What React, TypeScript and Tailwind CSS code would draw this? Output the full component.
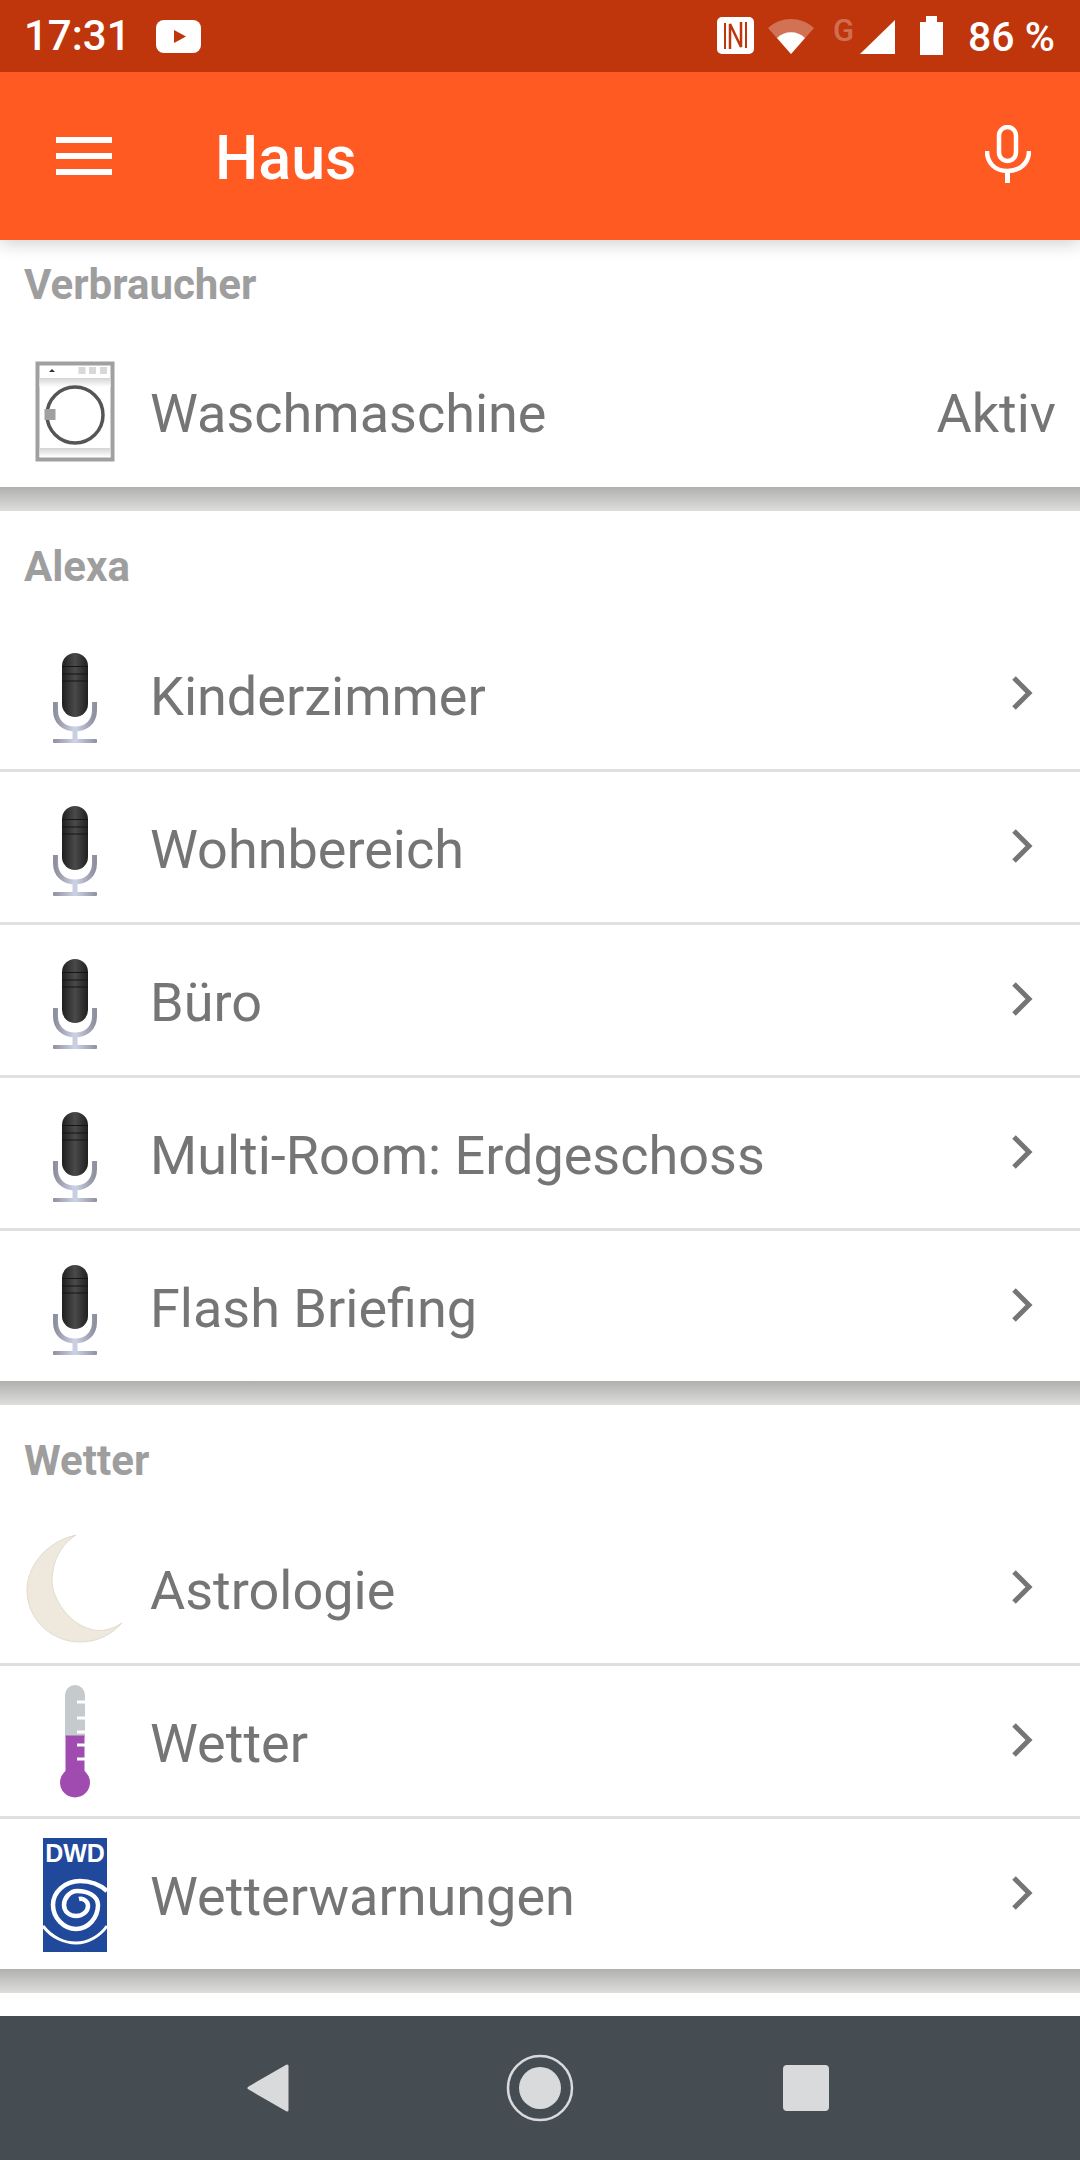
import React from 'react';

const roboto = { fontFamily: 'Roboto, sans-serif' };

const MicIcon = () => (
  <svg width="110" height="110" viewBox="0 0 110 110" className="overflow-visible">
    <defs>
      <linearGradient id="micBody" x1="0" x2="1" y1="0" y2="0">
        <stop offset="0" stopColor="#1f1f1f" />
        <stop offset="0.5" stopColor="#4a4a4a" />
        <stop offset="1" stopColor="#1f1f1f" />
      </linearGradient>
      <linearGradient id="micStand" x1="0" x2="1" y1="0" y2="0">
        <stop offset="0" stopColor="#8f90a0" />
        <stop offset="0.5" stopColor="#cdd3e6" />
        <stop offset="1" stopColor="#8f90a0" />
      </linearGradient>
    </defs>
    <path d="M35.5 64 V72 C35.5 84 44 91 55 91 C66 91 74.5 84 74.5 72 V64" fill="none" stroke="url(#micStand)" strokeWidth="5" />
    <rect x="52.5" y="90" width="5" height="13" fill="#c9cfe2" />
    <rect x="33" y="101" width="44" height="4" rx="1" fill="url(#micStand)" />
    <rect x="42" y="15" width="26" height="64" rx="13" fill="url(#micBody)" />
    <path d="M42 28.5 H68 M42 36 H68 M42 43 H68" stroke="#151515" strokeWidth="1.2" />
  </svg>
);

const WasherIcon = () => (
  <svg width="110" height="110" viewBox="0 -3 110 110" className="overflow-visible">
    <defs>
      <linearGradient id="washBand" x1="0" x2="0" y1="0" y2="1">
        <stop offset="0" stopColor="#d4d4d4" />
        <stop offset="1" stopColor="#ffffff" />
      </linearGradient>
    </defs>
    <rect x="17.5" y="6.5" width="75" height="96" fill="#fff" stroke="#a0a0a0" strokeWidth="4" />
    <rect x="19.5" y="21" width="71" height="9" fill="url(#washBand)" />
    <rect x="19.5" y="91" width="71" height="9" fill="url(#washBand)" />
    <path d="M29 15 L32 12 L35 15 Z" fill="#333" />
    <rect x="58.500" y="10" width="7" height="7" fill="#d8d8d8" />
    <rect x="69" y="10" width="7" height="7" fill="#d8d8d8" />
    <rect x="80" y="10" width="7" height="7" fill="#d8d8d8" />
    <circle cx="55" cy="58" r="28" fill="#fff" stroke="#555" strokeWidth="3.500" />
    <rect x="24.500" y="52" width="11" height="11" fill="#a0a0a0" />
  </svg>
);

const MoonIcon = () => (
  <svg width="110" height="110" viewBox="0 0 110 110" className="overflow-visible">
    <path
      d="M56 3 C22 11 7 38 7 58 C7 88 32 110 60 110 C 78 110 92 102 102 91 C 90 99 78 100 70 97 C 45 90 32 62 32 50 C 32 28 42 12 56 3Z"
      fill="#efe8dc"
      stroke="#e2dccf"
      strokeWidth="1"
    />
  </svg>
);

const ThermoIcon = () => (
  <svg width="110" height="110" viewBox="0 0 110 110" className="overflow-visible">
    <path d="M45 10 A10 10 0 0 1 65 10 V52 H45 Z" fill="#c5cacc" />
    <rect x="45.500" y="50.500" width="19" height="40" fill="#a04bb0" />
    <circle cx="55" cy="97.500" r="15" fill="#a04bb0" />
    <path d="M57 17 H66 M57 33 H66 M57 47 H66 M57 60 H66 M57 74 H66" stroke="#fff" strokeWidth="3" />
  </svg>
);

const DwdIcon = () => (
  <svg width="110" height="110" viewBox="0 0 110 110" className="overflow-visible">
    <rect x="23" y="0" width="64" height="114" fill="#20499c" />
    <text x="55" y="24" textAnchor="middle" fontFamily="Liberation Sans, sans-serif" fontWeight="700" fontSize="25" fill="#fff">DWD</text>
    <path
      d="M87 53 C78 45 68 43 60 43 C45 43 33 54 33 67 C33 80 44 91 56 91 C68 91 78 80 78 67 C78 58 68 53 57 53 C50 53 44 60 44 67 C44 74 50 78 56 78 C63 78 68 73 68 68 C68 63 63 60 59 61"
      fill="none"
      stroke="#fff"
      strokeWidth="4.500"
    />
    <path d="M23 88 C32 100 45 105 56 105 C68 105 80 98 87 88" fill="none" stroke="#fff" strokeWidth="3" />
  </svg>
);

const Chevron = () => (
  <svg width="24" height="36" viewBox="0 0 24 36" className="mr-[46px] mb-[2px] shrink-0">
    <path d="M4 3 L19 18 L4 33" fill="none" stroke="#757575" strokeWidth="5" />
  </svg>
);

type RowProps = {
  icon: React.ReactNode;
  label: string;
  divider?: boolean;
  last?: boolean;
  trailing?: React.ReactNode;
};

const Row = ({ icon, label, divider, last, trailing }: RowProps) => (
  <div className={`${last ? 'h-[150px]' : 'h-[153px]'} flex items-center ${divider ? 'border-b-[3px] border-[#e0e0e0]' : ''}`}>
    <div className="w-[150px] shrink-0 flex justify-center pb-[3px]">{icon}</div>
    <span className="flex-1 text-[54px] leading-none text-[#757575] pt-[6px]">{label}</span>
    {trailing ?? <Chevron />}
  </div>
);

const SectionTitle = ({ title, tall }: { title: string; tall?: boolean }) => (
  <div className={`${tall ? 'h-[108px] pt-[34px]' : 'h-[94px] pt-[23px]'} pl-[24px] text-[42px] leading-[44px] font-bold text-[#9e9e9e]`}>
    {title}
  </div>
);

const Gap = () => <div className="h-[24px] bg-gradient-to-b from-[#b0b0ae] to-[#dededc]" />;

const App: React.FC = () => {
  return (
    <div className="w-[1080px] h-[2160px] bg-white flex flex-col overflow-hidden" style={roboto}>
      {/* Status bar */}
      <div className="h-[72px] bg-[#bf360c] flex items-center text-white shrink-0 relative z-20">
        <span className="ml-[24px] text-[42px] font-medium leading-none">17:31</span>
        <svg width="45" height="33" viewBox="0 0 45 33" className="ml-[25px]">
          <rect width="45" height="33" rx="8" fill="#fff" />
          <path d="M18 10 L30 16.500 L18 23 Z" fill="#bf360c" />
        </svg>
        <div className="flex-1" />
        <svg width="340" height="72" viewBox="716 0 340 72" className="mr-[24px] overflow-visible">
          <rect x="717" y="17" width="37" height="37" rx="5" fill="#fff" />
          <path d="M725 23 V49 M746 22 V48" stroke="#bf360c" strokeWidth="2" />
          <path d="M730 49 V24 L741 47 V22" fill="none" stroke="#bf360c" strokeWidth="2.500" />
          <path d="M768 28 A34 34 0 0 1 814 28 L791 54 Z" fill="#fff" fillOpacity="0.3" />
          <path d="M777 38 A20 20 0 0 1 805 38 L791 54 Z" fill="#fff" />
          <text x="833" y="41" fontSize="31" fontWeight="500" fill="#fff" fillOpacity="0.3">G</text>
          <path d="M895 20 V54 H860 Z" fill="#fff" />
          <path d="M926 16 H937 V22 H943 V55 H920 V22 H926 Z" fill="#fff" />
          <text x="968" y="51" fontSize="41" fontWeight="500" fill="#fff">86 %</text>
        </svg>
      </div>

      {/* App bar */}
      <header className="h-[168px] bg-[#ff5a22] flex items-center text-white shrink-0 relative z-10 shadow-[0_4px_16px_rgba(0,0,0,0.18)]">
        <div className="ml-[56px] w-[56px] flex flex-col gap-[10px]">
          <div className="h-[6px] bg-white" />
          <div className="h-[6px] bg-white" />
          <div className="h-[6px] bg-white" />
        </div>
        <h1 className="ml-[103px] text-[61px] leading-none font-medium pt-[4px]">Haus</h1>
        <div className="flex-1" />
        <svg width="46" height="58" viewBox="0 0 46 58" className="mr-[49px] mt-[-4px]">
          <rect x="14" y="2" width="17" height="34" rx="8.500" fill="none" stroke="#fff" strokeWidth="4.500" />
          <path d="M2 26 C2 38 10 46 22.500 46 C35 46 44 38 44 26" fill="none" stroke="#fff" strokeWidth="4.500" />
          <path d="M22.500 46 V58" stroke="#fff" strokeWidth="5" />
        </svg>
      </header>

      {/* Content */}
      <main className="flex-1 flex flex-col overflow-hidden">
        <SectionTitle title="Verbraucher" />
        <Row
          icon={<WasherIcon />}
          label="Waschmaschine"
          trailing={<span className="mr-[24px] text-[54px] leading-none text-[#757575] pt-[6px]">Aktiv</span>}
        />
        <Gap />
        <SectionTitle title="Alexa" tall />
        <Row icon={<MicIcon />} label="Kinderzimmer" divider />
        <Row icon={<MicIcon />} label="Wohnbereich" divider />
        <Row icon={<MicIcon />} label="Büro" divider />
        <Row icon={<MicIcon />} label="Multi-Room: Erdgeschoss" divider />
        <Row icon={<MicIcon />} label="Flash Briefing" last />
        <Gap />
        <SectionTitle title="Wetter" tall />
        <Row icon={<MoonIcon />} label="Astrologie" divider />
        <Row icon={<ThermoIcon />} label="Wetter" divider />
        <Row icon={<DwdIcon />} label="Wetterwarnungen" last />
        <Gap />
      </main>

      {/* Navigation bar */}
      <nav className="h-[144px] bg-[#454c52] shrink-0 flex items-center justify-center pb-[1px] pr-[6px]">
        <svg width="44" height="50" viewBox="0 0 44 50">
          <path d="M41 3 V47 L3 25 Z" fill="#d9dadc" stroke="#d9dadc" strokeWidth="3" strokeLinejoin="round" />
        </svg>
        <svg width="68" height="68" viewBox="0 0 68 68" className="ml-[216px]">
          <circle cx="34" cy="34" r="32" fill="none" stroke="#d9dadc" strokeWidth="2.500" />
          <circle cx="34" cy="34" r="21" fill="#d9dadc" />
        </svg>
        <div className="ml-[209px] w-[46px] h-[46px] rounded-[4px] bg-[#d9dadc]" />
      </nav>
    </div>
  );
};

export default App;
